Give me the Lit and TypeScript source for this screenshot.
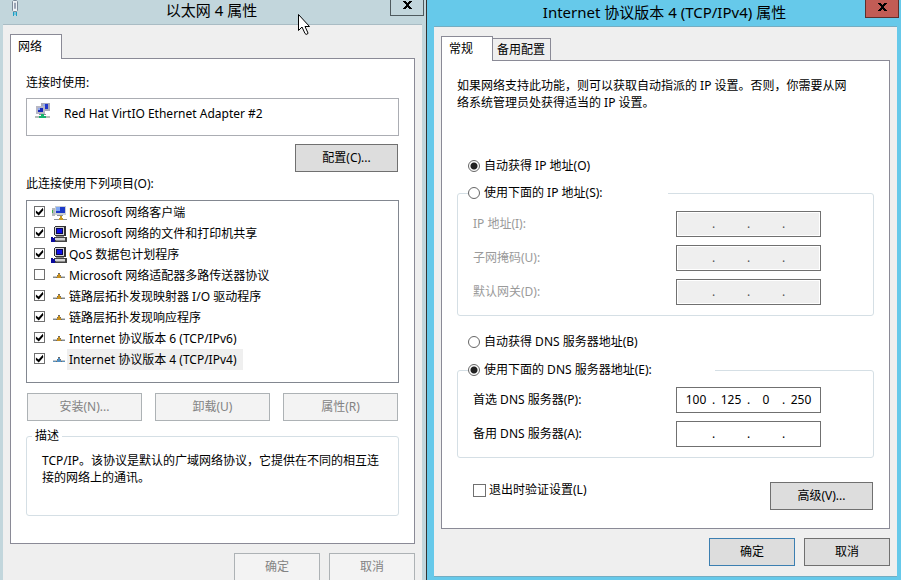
import { LitElement, html, css, svg } from "lit";
import { customElement, property } from "lit/decorators.js";

const base = css`
  * {
    box-sizing: border-box;
  }
  button,
  input {
    font: inherit;
    color: inherit;
    margin: 0;
    padding: 0;
    border-radius: 0;
  }
  svg {
    display: block;
  }
`;

const controls = css`
  .btn {
    height: 28px;
    background: #ddd;
    border: 1px solid #707070;
    line-height: 16px;
    white-space: nowrap;
  }
  .btn:disabled {
    background: #f3f3f3;
    border-color: #adb2b5;
    color: #838383;
  }
  .btn.default {
    border-color: #3c7fb1;
  }
  .wide {
    width: 103px;
    margin-right: 1px;
  }
  .footer {
    display: flex;
    justify-content: flex-end;
    gap: 9px;
    margin-top: 9px;
  }
  .footer .btn {
    width: 86px;
  }
  .tabs {
    display: flex;
    align-items: flex-end;
  }
  .tab {
    height: 22px;
    padding: 0 5px 0 4px;
    background: #efefef;
    border: 1px solid #8a8a96;
    border-left: 0;
    border-bottom: 0;
    line-height: 20px;
  }
  .tab.active {
    position: relative;
    width: 52px;
    height: 25px;
    margin-bottom: -1px;
    padding: 0 7px;
    background: #fff;
    border-left: 1px solid #8a8a96;
    text-align: left;
    line-height: 22px;
  }
  .panel {
    background: #fff;
    border: 1px solid #8a8a96;
    padding: 16px 15px;
  }
  fieldset {
    min-width: 0;
    margin: 0;
    padding: 0;
    border: 1px solid #d5dfe5;
    border-radius: 3px;
  }
  legend {
    padding: 0;
  }
  p {
    margin: 0;
    line-height: 17px;
  }
  .check {
    position: relative;
    flex: none;
    appearance: none;
    width: 11px;
    height: 11px;
    border: 1px solid #707070;
    background: #fff;
  }
  .check:checked::before {
    content: "";
    position: absolute;
    inset: 0;
    background: #000;
    clip-path: polygon(10% 38%, 40% 62%, 88% 8%, 92% 36%, 42% 94%, 10% 68%);
  }
`;

/** Title bar and coloured frame shared by both dialogs. */
@customElement("dialog-frame")
export class DialogFrame extends LitElement {
  @property() heading = "";
  @property({ type: Boolean, reflect: true }) active = false;

  static styles = [
    base,
    css`
      :host {
        display: flex;
        flex-direction: column;
        background: #c2d6dc;
        padding: 0 4px 0 3px;
        border-right: 1px solid #333;
      }
      :host([active]) {
        background: #66c9ea;
        padding: 0 4px 3px 7px;
        border-right: 0;
      }
      .bar {
        flex: none;
        display: grid;
        grid-template-columns: 30px 1fr 34px;
        align-items: start;
        height: 24px;
        margin-right: -2px;
      }
      :host([active]) .bar {
        height: 26px;
      }
      .icon {
        padding-left: 6px;
      }
      h1 {
        margin: 0;
        font-size: 15px;
        font-weight: 400;
        line-height: 20px;
        text-align: center;
        white-space: nowrap;
      }
      :host([active]) h1 {
        line-height: 24px;
      }
      .close {
        display: flex;
        justify-content: center;
        align-items: flex-start;
        height: 16px;
        background: transparent;
        border: 1px solid #4f5a5e;
        border-top: 0;
      }
      :host([active]) .close {
        height: 18px;
        background: #c25c55;
        border-color: #5e2f2c;
      }
      .close svg {
        margin-top: 1px;
      }
      :host([active]) .close svg {
        margin-top: 3px;
      }
      .body {
        flex: 1 0 auto;
        background: #efefef;
        border-top: 1px solid #a9bcc4;
        padding: 9px 7px 10px;
      }
      :host([active]) .body {
        border-top-color: #74adc2;
        border-bottom: 1px solid #74adc2;
      }
    `,
  ];

  render() {
    return html`
      <header class="bar">
        <span class="icon"><slot name="icon"></slot></span>
        <h1>${this.heading}</h1>
        <button class="close" aria-label="关闭">
          <svg width="9" height="8" viewBox="0 0 9 8" shape-rendering="crispEdges">
            <path
              d="M0 0h3v1h1v1h1v-1h1v-1h3v1h-1v1h-1v1h-1v2h1v1h1v1h1v1h-3v-1h-1v-1h-1v1h-1v1h-3v-1h1v-1h1v-1h1v-2h-1v-1h-1v-1h-1z"
            />
          </svg>
        </button>
      </header>
      <div class="body"><slot></slot></div>
    `;
  }
}

const clientIcon = svg`
  <svg width="16" height="16" viewBox="0 0 16 16" shape-rendering="crispEdges">
    <path fill="#b5b9bd" d="M1 3h3v8h-3z" /><path fill="#3fae49" d="M1 5h1v3h-1z" />
    <path fill="#c9ced3" d="M4 1h11v9h-11z" /><path fill="#1c39c9" d="M5 2h9v6h-9z" />
    <path fill="#7fa6f5" d="M5 2h4v4h-4z" /><path fill="#8c9196" d="M6 10h6v1h-6zM3 14h13v1h-13z" />
    <path fill="#c99a1e" d="M9 11h2v2h-2zM8 13h4v2h-4z" />
  </svg>`;

const serviceIcon = svg`
  <svg width="16" height="16" viewBox="0 0 16 16" shape-rendering="crispEdges">
    <path fill="#333" d="M4 0h10l1 1v9h-11v-1h-1v-8h1z" /><path fill="#d4d4d4" d="M4 1h9v8h-9z" />
    <path fill="#0a0a50" d="M5 2h7v6h-7z" /><path fill="#1111e8" d="M6 3h5v4h-5z" />
    <path fill="#444" d="M3 11h12l1 1v4h-13z" /><path fill="#d4d4d4" d="M4 12h10v2h-10z" />
    <path fill="#888" d="M5 10h8v1h-8zM5 14h9v1h-9z" />
    <path fill="#0b0b9c" d="M0 11h2v1h2v4h-4z" />
  </svg>`;

const linkIcon = (body: string, line: string) => svg`
  <svg width="16" height="16" viewBox="0 0 16 16" shape-rendering="crispEdges">
    <path fill="${line}" d="M2 9h12v1h-12z" /><path fill="#c3c7ca" d="M2 8h12v1h-12z" />
    <path fill="#6f6a66" d="M7 5h2v1h-2zM6 7h1v1h-1zM9 7h1v1h-1zM5 9h1v1h-1zM10 9h1v1h-1z" />
    <path fill="${body}" d="M7 6h2v2h1v2h-4v-2h1z" />
  </svg>`;

const protocolIcon = linkIcon("#c78f1c", "#82898f");
const selectedIcon = linkIcon("#4f8fc4", "#5b93bf");

const adapterIcon = svg`
  <svg width="16" height="16" viewBox="0 0 16 16" shape-rendering="crispEdges">
    <path fill="#a9a9b8" d="M6 0h9v8h-9z" /><path fill="#2236c8" d="M8 1h5v5h-5z" />
    <path fill="#8fa8ee" d="M8 1h2v2h-2z" />
    <path fill="#b7b7c4" d="M1 3h9v8h-9z" /><path fill="#1526bd" d="M3 5h5v4h-5z" />
    <path fill="#8fa8ee" d="M3 5h2v2h-2z" /><path fill="#8b8b98" d="M4 11h7v1h-7z" />
    <path fill="#b5bcb8" d="M0 13h15v2h-15z" /><path fill="#16b36c" d="M6 11h3v2h2v2h-7v-2h2z" />
  </svg>`;

const plugIcon = svg`
  <svg width="10" height="16" viewBox="0 0 10 16">
    <path fill="#eef3f6" stroke="#7c8a99" d="M3.500 1.500l1-1h3l1 1v9l-1 1h-3l-1-1z" />
    <path fill="none" stroke="#9aa4b5" d="M5.500 3v5.500h1v-5.500z" />
    <path fill="#1d9fc4" d="M4 12h1v4h-1zM7 12h1v4h-1z" />
    <path fill="#7cc4da" d="M5 12h1v3h-1zM6 12h1v3h-1z" />
  </svg>`;

interface Item {
  label: string;
  icon: unknown;
  checked: boolean;
  selected?: boolean;
}

const ITEMS: Item[] = [
  { label: "Microsoft 网络客户端", icon: clientIcon, checked: true },
  { label: "Microsoft 网络的文件和打印机共享", icon: serviceIcon, checked: true },
  { label: "QoS 数据包计划程序", icon: serviceIcon, checked: true },
  { label: "Microsoft 网络适配器多路传送器协议", icon: protocolIcon, checked: false },
  { label: "链路层拓扑发现映射器 I/O 驱动程序", icon: protocolIcon, checked: true },
  { label: "链路层拓扑发现响应程序", icon: protocolIcon, checked: true },
  { label: "Internet 协议版本 6 (TCP/IPv6)", icon: protocolIcon, checked: true },
  { label: "Internet 协议版本 4 (TCP/IPv4)", icon: selectedIcon, checked: true, selected: true },
];

@customElement("adapter-dialog")
export class AdapterDialog extends LitElement {
  static styles = [
    base,
    controls,
    css`
      :host {
        display: flex;
      }
      dialog-frame {
        flex: 1;
        min-width: 0;
      }
      .panel {
        padding-bottom: 27px;
      }
      .caption {
        line-height: 16px;
      }
      .adapter {
        display: flex;
        gap: 13px;
        height: 38px;
        margin: 7px 0 8px;
        padding: 4px 8px;
        border: 1px solid #abadb3;
      }
      .adapter span {
        line-height: 22px;
      }
      .configure {
        display: flex;
        justify-content: flex-end;
        margin-bottom: 4px;
      }
      .list {
        list-style: none;
        height: 183px;
        margin: 8px 0 10px;
        padding: 1px 0 1px 7px;
        border: 1px solid #828790;
      }
      .list label {
        display: flex;
        align-items: center;
        height: 21px;
      }
      .list .check {
        margin: 0 6px 2px 0;
      }
      .name {
        line-height: 21px;
        padding: 0 6px 0 2px;
        white-space: nowrap;
      }
      .name.selected {
        background: #efefef;
      }
      .actions {
        display: flex;
        gap: 13px;
        margin: 0 1px 7px;
      }
      .actions .btn {
        flex: 1;
      }
      .about {
        height: 88px;
      }
      .about legend {
        margin-left: 5px;
        padding: 0 3px;
        line-height: 16px;
      }
      .about p {
        padding: 8px 15px 0;
      }
    `,
  ];

  render() {
    return html`
      <dialog-frame heading="以太网 4 属性">
        <span slot="icon">${plugIcon}</span>
        <div class="tabs" role="tablist">
          <button class="tab active" role="tab" aria-selected="true">网络</button>
        </div>
        <section class="panel" role="tabpanel">
          <div class="caption">连接时使用:</div>
          <div class="adapter">${adapterIcon}<span>Red Hat VirtIO Ethernet Adapter #2</span></div>
          <div class="configure"><button class="btn wide">配置(C)...</button></div>
          <div class="caption" id="items">此连接使用下列项目(O):</div>
          <ul class="list" aria-labelledby="items">
            ${ITEMS.map(
              (item) => html`<li>
                <label>
                  <input class="check" type="checkbox" .checked=${item.checked} />
                  ${item.icon}<span class="name ${item.selected ? "selected" : ""}">${item.label}</span>
                </label>
              </li>`
            )}
          </ul>
          <div class="actions">
            <button class="btn" disabled>安装(N)...</button>
            <button class="btn" disabled>卸载(U)</button>
            <button class="btn" disabled>属性(R)</button>
          </div>
          <fieldset class="about">
            <legend>描述</legend>
            <p>TCP/IP。该协议是默认的广域网络协议，它提供在不同的相互连接的网络上的通讯。</p>
          </fieldset>
        </section>
        <div class="footer">
          <button class="btn" disabled>确定</button>
          <button class="btn" disabled>取消</button>
        </div>
      </dialog-frame>
    `;
  }
}

/** Label with a four-part address box. */
@customElement("address-row")
export class AddressRow extends LitElement {
  @property() label = "";
  @property({ type: Array }) parts: string[] = ["", "", "", ""];
  @property({ type: Boolean, reflect: true }) disabled = false;

  static styles = [
    base,
    css`
      :host {
        display: flex;
        justify-content: space-between;
        align-items: center;
      }
      :host([disabled]) {
        color: #9a9a9a;
      }
      .field {
        display: flex;
        width: 145px;
        height: 26px;
        padding: 0 4px;
        border: 1px solid #707070;
        background: #fff;
        color: #000;
        line-height: 24px;
      }
      :host([disabled]) .field {
        background: #efefef;
        color: #555;
        box-shadow: inset 0 0 0 1px #fff;
      }
      input {
        flex: 1;
        min-width: 0;
        border: 0;
        background: transparent;
        text-align: center;
      }
      .dot {
        width: 5px;
        text-align: center;
      }
    `,
  ];

  render() {
    return html`
      <span id="name">${this.label}</span>
      <div class="field" role="group" aria-labelledby="name">
        ${this.parts.map(
          (part, i) => html`${i ? html`<span class="dot">.</span>` : ""}<input
              type="text"
              maxlength="3"
              aria-labelledby="name"
              .value=${part}
              ?disabled=${this.disabled}
            />`
        )}
      </div>
    `;
  }
}

@customElement("protocol-dialog")
export class ProtocolDialog extends LitElement {
  static styles = [
    base,
    controls,
    css`
      :host {
        display: flex;
      }
      dialog-frame {
        flex: 1;
        min-width: 0;
      }
      .panel {
        padding-bottom: 18px;
      }
      .intro {
        margin-bottom: 45px;
        padding-right: 22px;
      }
      .option {
        display: flex;
        align-items: center;
        gap: 4px;
        height: 20px;
        line-height: 16px;
        white-space: nowrap;
      }
      .plain {
        margin: 0 0 7px 11px;
      }
      .second {
        margin-top: 16px;
        margin-bottom: 8px;
      }
      legend {
        margin-left: 10px;
      }
      .ip legend {
        width: 200px;
      }
      .dns legend {
        width: 247px;
      }
      .radio {
        flex: none;
        appearance: none;
        width: 12px;
        height: 12px;
        border: 1px solid #666;
        border-radius: 50%;
        background: #fff;
      }
      .radio:checked {
        background: radial-gradient(circle, #222 3px, #fff 4px);
      }
      .rows {
        display: flex;
        flex-direction: column;
        gap: 8px;
        padding: 8px 52px 10px 15px;
      }
      .dns .rows {
        padding-top: 7px;
      }
      .bottom {
        display: flex;
        justify-content: space-between;
        align-items: flex-start;
        margin-top: 24px;
      }
      .verify {
        display: flex;
        align-items: center;
        gap: 3px;
        margin-left: 16px;
        line-height: 16px;
      }
      .verify .check {
        width: 13px;
        height: 13px;
      }
    `,
  ];

  render() {
    return html`
      <dialog-frame active heading="Internet 协议版本 4 (TCP/IPv4) 属性">
        <div class="tabs" role="tablist">
          <button class="tab active" role="tab" aria-selected="true">常规</button>
          <button class="tab" role="tab" aria-selected="false">备用配置</button>
        </div>
        <section class="panel" role="tabpanel">
          <p class="intro">
            如果网络支持此功能，则可以获取自动指派的 IP 设置。否则，你需要从网络系统管理员处获得适当的 IP 设置。
          </p>
          <label class="option plain">
            <input class="radio" type="radio" name="ip" checked />自动获得 IP 地址(O)
          </label>
          <fieldset class="ip">
            <legend>
              <label class="option">
                <input class="radio" type="radio" name="ip" />使用下面的 IP 地址(S):
              </label>
            </legend>
            <div class="rows">
              <address-row disabled label="IP 地址(I):"></address-row>
              <address-row disabled label="子网掩码(U):"></address-row>
              <address-row disabled label="默认网关(D):"></address-row>
            </div>
          </fieldset>
          <label class="option plain second">
            <input class="radio" type="radio" name="dns" />自动获得 DNS 服务器地址(B)
          </label>
          <fieldset class="dns">
            <legend>
              <label class="option">
                <input class="radio" type="radio" name="dns" checked />使用下面的 DNS 服务器地址(E):
              </label>
            </legend>
            <div class="rows">
              <address-row label="首选 DNS 服务器(P):" .parts=${["100", "125", "0", "250"]}></address-row>
              <address-row label="备用 DNS 服务器(A):"></address-row>
            </div>
          </fieldset>
          <div class="bottom">
            <label class="verify"><input class="check" type="checkbox" />退出时验证设置(L)</label>
            <button class="btn wide">高级(V)...</button>
          </div>
        </section>
        <div class="footer">
          <button class="btn default">确定</button>
          <button class="btn">取消</button>
        </div>
      </dialog-frame>
    `;
  }
}

@customElement("app-root")
export class AppRoot extends LitElement {
  static styles = [
    base,
    css`
      :host {
        position: relative;
        display: flex;
        height: 100vh;
        overflow: hidden;
        font-family: "Noto Sans", "Noto Sans CJK SC", sans-serif;
        font-size: 12px;
        line-height: 16px;
        color: #000;
      }
      adapter-dialog {
        flex: 427 1 0;
        min-width: 0;
      }
      protocol-dialog {
        flex: 474 1 0;
        min-width: 0;
      }
      .pointer {
        position: absolute;
        left: 298px;
        top: 14px;
      }
    `,
  ];

  render() {
    return html`
      <adapter-dialog></adapter-dialog>
      <protocol-dialog></protocol-dialog>
      <svg class="pointer" width="13" height="22" viewBox="0 0 13 22" aria-hidden="true">
        <path
          fill="#fff"
          stroke="#000"
          d="M.5 .5v16l3.500-3.500l3 6.500q1 1.500 2.500 0.500l.5-1l-3-6.500h4.500z"
        />
      </svg>
    `;
  }
}
